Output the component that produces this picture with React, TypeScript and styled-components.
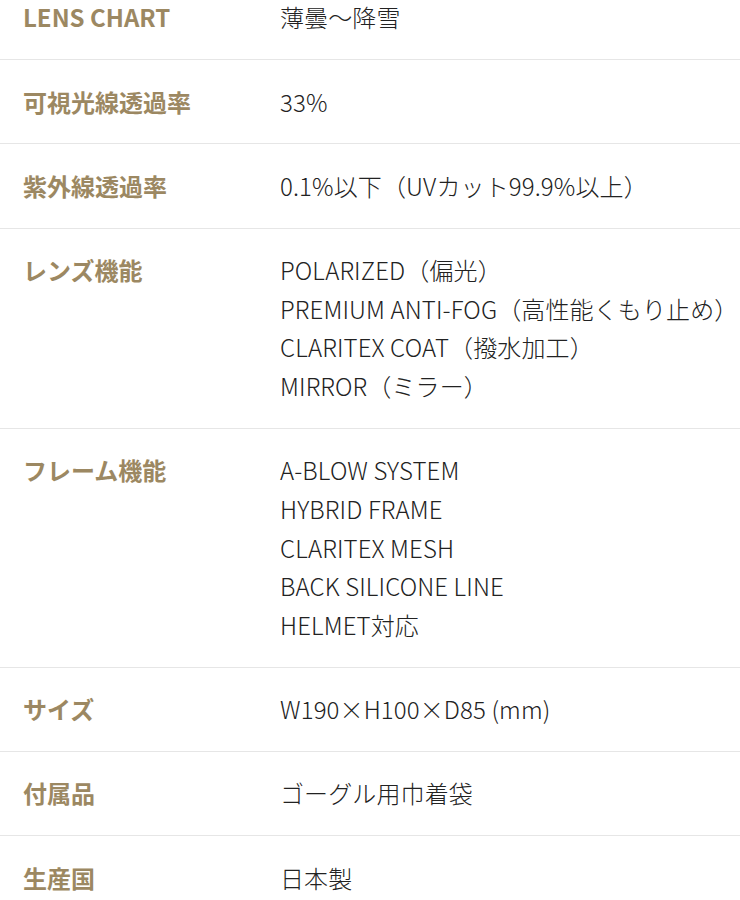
import React from "react";
import styled, { createGlobalStyle } from "styled-components";

const Global = createGlobalStyle`
  html, body { margin: 0; padding: 0; background: #fff; }
  body { font-family: "Noto Sans CJK JP", "Noto Sans", sans-serif; }
`;

const Table = styled.dl`
  margin: -24px 0 0 0;
  padding: 0;
  width: 740px;
`;

const Row = styled.div`
  display: grid;
  grid-template-columns: 258px 1fr;
  padding: 22.3px 0 22.25px 23px;
  border-bottom: 1px solid #e6e6e6;
  font-size: 24px;
  line-height: 38.67px;
`;

const Label = styled.dt`
  margin: 0;
  color: #9c8862;
  font-weight: 700;
`;

const Value = styled.dd`
  margin: 0 0 0 -1px;
  color: #222;
  font-weight: 300;
  white-space: nowrap;
  letter-spacing: 0.005em;
`;

const Line = styled.div``;

const rows: [string, string[]][] = [
  ["LENS CHART", ["薄曇～降雪"]],
  ["可視光線透過率", ["33%"]],
  ["紫外線透過率", ["0.1%以下（UVカット99.9%以上）"]],
  [
    "レンズ機能",
    [
      "POLARIZED（偏光）",
      "PREMIUM ANTI-FOG（高性能くもり止め）",
      "CLARITEX COAT（撥水加工）",
      "MIRROR（ミラー）",
    ],
  ],
  [
    "フレーム機能",
    ["A-BLOW SYSTEM", "HYBRID FRAME", "CLARITEX MESH", "BACK SILICONE LINE", "HELMET対応"],
  ],
  ["サイズ", ["W190×H100×D85 (mm)"]],
  ["付属品", ["ゴーグル用巾着袋"]],
  ["生産国", ["日本製"]],
];

export default function App() {
  return (
    <>
      <Global />
      <Table>
        {rows.map(([label, values]) => (
          <Row key={label}>
            <Label>{label}</Label>
            <Value>
              {values.map((v) => (
                <Line key={v}>{v}</Line>
              ))}
            </Value>
          </Row>
        ))}
      </Table>
    </>
  );
}
